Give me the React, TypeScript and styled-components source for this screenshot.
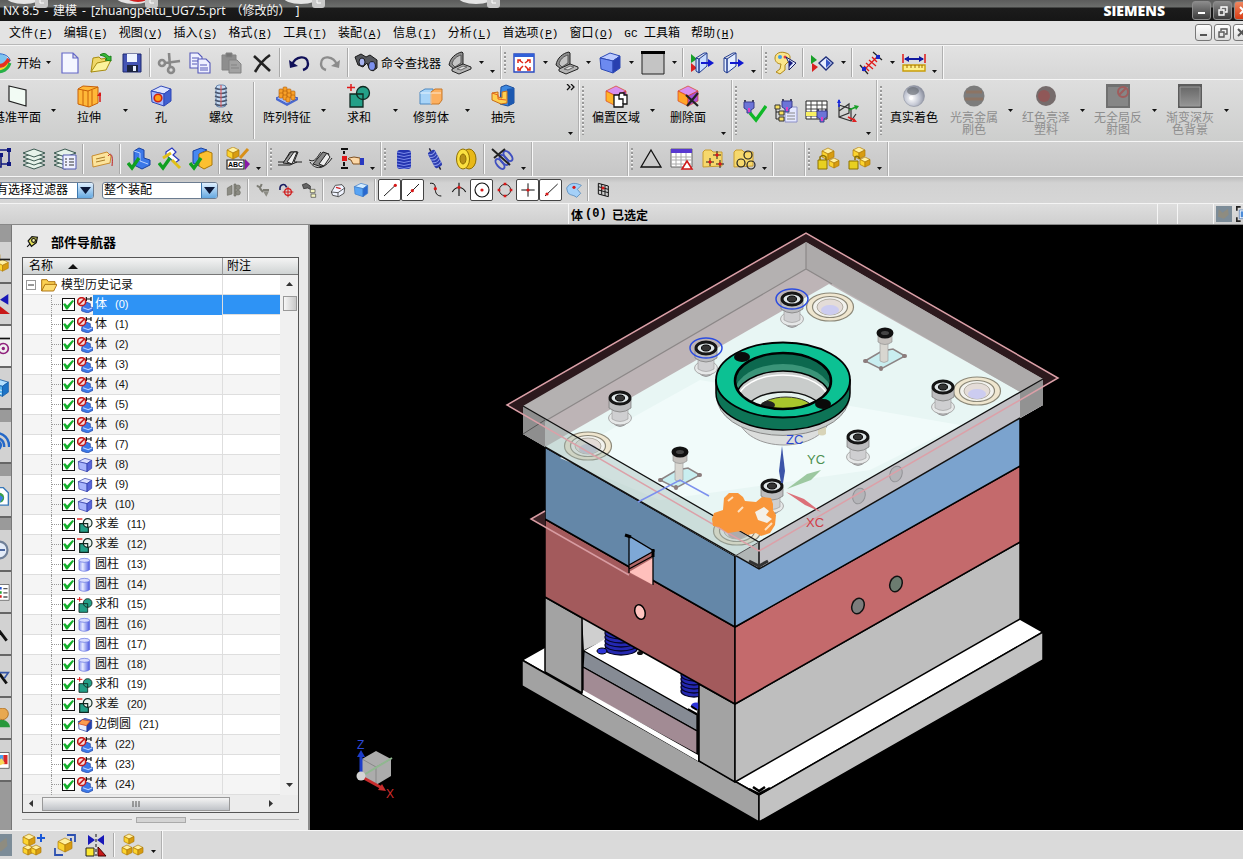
import React from 'react';
import styled, { createGlobalStyle, css } from 'styled-components';

const Global = createGlobalStyle`
  * { box-sizing: border-box; }
  html, body { margin: 0; padding: 0; }
  body {
    overflow: hidden;
    background: #000;
    color: #000;
    font-family: "Liberation Sans", "Noto Sans CJK SC", sans-serif;
    font-size: 12px;
  }
  button, select, input { font: inherit; color: inherit; margin: 0; padding: 0; }
`;

/* ---------- icons ---------- */

const cube = (x: number, y: number, s: number, l: string, t: string, r: string, st = 'none') => (
  <g stroke={st} strokeWidth=".7" strokeLinejoin="round">
    <polygon fill={t} points={`${x},${y - s} ${x + s},${y - s / 2} ${x},${y} ${x - s},${y - s / 2}`} />
    <polygon fill={l} points={`${x - s},${y - s / 2} ${x},${y} ${x},${y + s} ${x - s},${y + s / 2}`} />
    <polygon fill={r} points={`${x + s},${y - s / 2} ${x},${y} ${x},${y + s} ${x + s},${y + s / 2}`} />
  </g>
);
const block = (l: string, t: string, r: string, st: string) => (
  <g stroke={st} strokeWidth="1" strokeLinejoin="round">
    <polygon fill={t} points="2,7 12,2 22,5 15,10" />
    <polygon fill={l} points="2,7 15,10 15,22 3,18" />
    <polygon fill={r} points="15,10 22,5 22,17 15,22" />
  </g>
);
const gold = (x: number, y: number, s = 6) => cube(x, y, s, '#fcd430', '#fff0a0', '#d89c10', '#b07c08');
const tick = <path d="M1 16l4 5L12 11" fill="none" stroke="#10a020" strokeWidth="3.4" />;
const laptop = (
  <g stroke="#222" strokeWidth="1" strokeLinejoin="round">
    <path d="M1 14C2 7 8 2 14 1l1 1v11l-9 5z" fill="#8e8e8e" />
    <path d="M4 13C5 8 9 5 13 4v8l-6 4z" fill="#c4c4c4" stroke="#555" />
    <path d="M4 18l11-5 8 3v2l-12 5-7-3z" fill="#b4b4b4" />
    <path d="M9 18l6-3 4 1-6 3z" fill="#ddd" stroke="#666" />
  </g>
);
const plug = (x: number, y: number) => (
  <g transform={`translate(${x} ${y})`}>
    <path d="M1 0v3M9 0v3" stroke="#445" strokeWidth="2" />
    <path d="M0 2h10v6l-3 2v3H3v-3L0 8z" fill="#6c74d8" stroke="#3a3c8c" />
    <path d="M4 8h2v4H4z" fill="#e040c0" />
  </g>
);
const layers = (
  <g fill="#e6f2ea" stroke="#3c5a52" strokeWidth="1">
    {[18, 14, 10, 6].map((y) => (
      <path key={y} d={`M1 ${y}L12 ${y - 4}L23 ${y}L12 ${y + 4}z`} />
    ))}
  </g>
);
const folder = <path d="M2 5l2-2h6l2 2h9v14l-19 1z" fill="#f6d86c" stroke="#c89c30" />;

const ICONS: Record<string, React.ReactNode> = {
  swirl: (
    <g fill="none">
      <circle cx="12" cy="12" r="9" fill="#7cc4f0" />
      <path d="M3 8c6 10 14 8 18 0" stroke="#e83020" strokeWidth="4" />
      <path d="M2 12c4 8 14 9 19 1" stroke="#f8d820" strokeWidth="3" />
      <path d="M4 18c6 5 15 3 18-6" stroke="#28b048" strokeWidth="3" />
      <path d="M1 9c-1-8 20-9 21 1" stroke="#2468d0" strokeWidth="1" />
    </g>
  ),
  newdoc: <path d="M4 2h11l5 5v15H4zM15 2v5h5" fill="#f4f6ff" stroke="#6468c8" strokeWidth="1.2" />,
  open: (
    <g stroke="#a88c10" strokeLinejoin="round">
      <path d="M2 21L4 7l6-1 2 2 8-1v5z" fill="#f0d868" />
      <path d="M2 21l6-9 14-3-5 10z" fill="#fbf29c" />
      <path d="M11 4c4-3 7-1 9 2l2-1v5l-6-1 2-1c-2-3-4-3-7-4z" fill="#38b838" stroke="#188018" />
    </g>
  ),
  save: (
    <g>
      <path d="M3 3h18v18H3z" fill="#4454b4" stroke="#1c2870" />
      <path d="M7 3h10v8H7z" fill="#eef4ff" />
      <path d="M7 14h11v7H7z" fill="#1c2440" />
      <path d="M13 15h3v5h-3z" fill="#e8f0ff" />
    </g>
  ),
  cut: (
    <g fill="none" stroke="#888" strokeWidth="2.6">
      <circle cx="5" cy="12" r="3" />
      <circle cx="14" cy="19" r="3" />
      <path d="M8 12l15-2M13 16L12 2" />
    </g>
  ),
  copy: (
    <g fill="#eef0ff" stroke="#5458b8" strokeWidth="1.1">
      <path d="M2 2h8l4 4v11H2zM4 7h7M4 10h7M4 13h5" />
      <path d="M10 8h8l4 4v10H10zM12 14h7M12 17h8M12 19h8" />
    </g>
  ),
  paste: (
    <g fill="#8e8e8e" stroke="#838383">
      <path d="M3 4h14v15H3z" />
      <path d="M7 2h6v4H7z" fill="#777" />
      <path d="M10 9h8l4 4v9H10zM12 14h6M12 17h8" fill="#a2a2a2" />
    </g>
  ),
  del: <path d="M4 5l16 15M20 4C14 8 9 14 5 21" fill="none" stroke="#222" strokeWidth="2.6" />,
  undo: (
    <g fill="none" stroke="#101058" strokeWidth="2.4">
      <path d="M5 14C8 5 21 3 21 13c0 3-2 5-5 6" />
      <path d="M2 9l1 8 8-2z" fill="#101058" stroke="none" />
    </g>
  ),
  redo: (
    <g fill="none" stroke="#8c8c8c" strokeWidth="2.4">
      <path d="M19 14C16 5 3 3 3 13c0 3 2 5 5 6" />
      <path d="M22 9l-1 8-8-2z" fill="#8c8c8c" stroke="none" />
    </g>
  ),
  find: (
    <g stroke="#1a1a1a" strokeWidth="1">
      <path d="M1 6l6-3 5 3 4-2 7 5v8l-4 3-4-3-2-5-4 4-5-2z" fill="#55575c" />
      <ellipse cx="8" cy="11" rx="3" ry="4" fill="#a8b4f0" />
      <ellipse cx="18" cy="15" rx="3.4" ry="4.4" fill="#7c90ee" />
    </g>
  ),
  laptop,
  fit: (
    <g>
      <path d="M2 3h20v18H2z" fill="#fff" stroke="#2848c0" strokeWidth="1.4" />
      <path d="M2 3h20v3H2z" fill="#3060d8" />
      <path d="M7 9l4 3M17 9l-4 3M7 19l4-4M17 19l-4-4M6 12V9h3M18 12V9h-3M6 16v3h3M18 16v3h-3" fill="none" stroke="#e02818" strokeWidth="1.5" />
    </g>
  ),
  bluecube: block('#6c8af0', '#bccbff', '#2840b0', '#2c48b4'),
  window: (
    <g>
      <path d="M1 1h22v22H1z" fill="#c4c4c4" stroke="#222" />
      <path d="M0 0h24v3H0z" fill="#000" />
    </g>
  ),
  doorin: (
    <g>
      <path d="M1 3l6 5-6 4z" fill="#18a028" />
      <path d="M1 12l6 5-6 4z" fill="#d82020" />
      <path d="M9 8l8-6v13l-8 7zM6 7l3 1v14l-3-2zM6 7l8-5h3" fill="#c8dcff" stroke="#223c90" />
      <path d="M11 12h8" stroke="#1018d0" strokeWidth="2" />
      <path d="M18 8l6 4-6 4z" fill="#1018d0" />
    </g>
  ),
  door: (
    <g>
      <path d="M6 8l9-6v13l-9 7zM3 7l3 1v14l-3-2zM3 7l9-5h3" fill="#e4eeff" stroke="#223c90" />
      <path d="M9 12h9" stroke="#1018d0" strokeWidth="2" />
      <path d="M17 8l6 4-6 4z" fill="#1018d0" />
    </g>
  ),
  palette: (
    <g stroke="#b08818">
      <path d="M2 7C2 2 8 0 13 2c5 1 5 6 2 9l-3 3v5l-5 4-4-2 4-3 1-5c-3 0-6-2-6-6z" fill="#fbe68c" />
      <circle cx="7" cy="6" r="2" fill="#40a0e8" stroke="none" />
      <circle cx="12" cy="6" r="1.5" fill="#e84040" stroke="none" />
      <path d="M13 6l10 6-7 7V12z" fill="#dfe8ff" stroke="#181c60" />
      <path d="M16 9l4 3-4 4z" fill="#181c80" stroke="none" />
    </g>
  ),
  arrowcube: (
    <g>
      <path d="M1 4l6 5-6 4z" fill="#18a028" />
      <path d="M2 12l6 4-6 5z" fill="#d82020" />
      <path d="M9 12l7-6 7 6-7 7z" fill="#e8eeff" stroke="#20307c" strokeWidth="1.4" />
      <path d="M16 8v9l5-5z" fill="#3858c8" />
    </g>
  ),
  align: (
    <g strokeWidth="1.3" stroke="#e01818">
      <path d="M4 20L20 4M7 12l7 6M10 9l7 6M5 15l5 5M13 6l5 5" />
      <path d="M1 14l8 9M14 1l9 8" stroke="#222" />
      <path d="M3 16h4v4H3zM17 4h4v4h-4z" fill="#1828c8" stroke="none" />
    </g>
  ),
  ruler: (
    <g>
      <path d="M1 3v9M23 3v9" stroke="#e01818" strokeWidth="1.5" />
      <path d="M3 8h18" stroke="#1018a0" strokeWidth="2" />
      <path d="M2 8l5-3v6zM22 8l-5-3v6z" fill="#1018a0" />
      <path d="M1 14h22v6H1z" fill="#fdf08c" stroke="#c89c08" strokeWidth="1.4" />
      <path d="M5 14v3M9 14v3M13 14v3M17 14v3M20 14v3" stroke="#a06c00" />
    </g>
  ),
  plane: <path d="M4 2l17 4v16L4 17z" fill="#f2fbf4" stroke="#222" strokeWidth="1.2" />,
  extrude: (
    <g stroke="#c86008">
      <path d="M1 5l5-3 15 1v16l-9 4-11-3z" fill="#ffb838" />
      <path d="M1 5l10 2 10-4M11 7v16M6 6v15M15 6v15" fill="none" />
      <path d="M23 9v9" stroke="#d81818" strokeWidth="1.5" />
      <path d="M20 12l3-4 3 4z" fill="#d81818" stroke="none" />
    </g>
  ),
  hole: (
    <g>
      {block('#a4b8ff', '#dce4ff', '#4060d0', '#3048b8')}
      <circle cx="9" cy="14" r="3.8" fill="#ff9c18" stroke="#d02010" strokeWidth="1.6" />
    </g>
  ),
  thread: (
    <g>
      <rect x="7" y="1" width="10" height="22" rx="3" fill="#c8dcf4" stroke="#6888b0" />
      {[4, 8, 12, 16, 20].map((y) => (
        <path key={y} d={`M6 ${y}q6 3 12 0`} fill="none" stroke="#4c5870" strokeWidth="1.4" />
      ))}
      <path d="M12 1v22" stroke="#e05050" />
    </g>
  ),
  pattern: (
    <g>
      <path d="M1 14l9-4 13 4-11 6z" fill="#a8c0ff" stroke="#3858c0" />
      <path d="M1 14v2l11 6 11-6v-2l-11 6z" fill="#4868d0" />
      {[[9, 7], [5, 9], [13, 9], [9, 11], [17, 11], [5, 13], [13, 13], [9, 15], [17, 15], [12, 17]].map(([x, y]) => (
        <rect key={`${x}-${y}`} x={x - 1} y={y - 4} width="4" height="5" rx="1" fill="#f8a028" stroke="#b05c08" strokeWidth=".6" />
      ))}
    </g>
  ),
  unite: (
    <g stroke="#102820" strokeWidth="1.3">
      <path d="M3 10h13v13H3z" fill="#24a088" />
      <circle cx="16" cy="9" r="6.5" fill="#24a088" />
      <path d="M9.500 10H16v5.500" fill="none" />
      <path d="M4 0v7M0 3.500h8" stroke="#e01818" strokeWidth="1.5" />
    </g>
  ),
  trim: (
    <g>
      <path d="M1 8l5-3h8v14l-2 1H1z" fill="#a8d4f8" stroke="#4c88c0" />
      <path d="M12 8l4-3h7v11l-3 4h-8z" fill="#fcb060" stroke="#c87828" />
      <path d="M1 9h21M12 9v11" stroke="#fff" opacity=".7" />
    </g>
  ),
  shell: (
    <g>
      <path d="M10 3l5-2 8 3v15l-6 3-8-2z" fill="#3c88e0" stroke="#1c4c98" />
      <path d="M16 5l7-1v15l-6 3z" fill="#1c58b0" />
      <path d="M1 9l6-1v5l4 1V8l5-1v12l-6 1-9-4z" fill="#ffd050" stroke="#c86c18" />
      <path d="M1 9l6 2v4l8 1" fill="none" stroke="#e86020" />
    </g>
  ),
  offset: (
    <g>
      {cube(12, 12, 10, '#ffb428', '#d890f0', '#8c40c8', '#d84020')}
      <path d="M10 11h5l1-2h4v2h3v9h-4v3h-9z" fill="#fff" stroke="#111" strokeWidth="1.3" />
      <path d="M15 11v4h4v5" fill="none" stroke="#111" strokeWidth="1.3" />
    </g>
  ),
  delface: (
    <g>
      {cube(12, 12, 10, '#ffa428', '#d890f0', '#a850d8', '#d84020')}
      <path d="M10 11l12 11M22 9L11 22" stroke="#222" strokeWidth="2.2" />
    </g>
  ),
  plugcheck: (
    <g>
      {plug(1, 1)}
      <path d="M7 14l6 7L23 7" fill="none" stroke="#10b828" strokeWidth="3.4" />
    </g>
  ),
  plugtree: (
    <g>
      <path d="M11 8h12v15H11z" fill="#e4e8ff" stroke="#8c90c8" />
      <path d="M13 14h8M13 17h8M13 20h8" stroke="#888" />
      {plug(8, 0)}
      <path d="M2 8v12h5M2 13h5" fill="none" stroke="#222" />
      <path d="M1 6h5v4H1zM5 12h5v4H5zM5 18h5v4H5z" fill="#f8e060" stroke="#333" />
    </g>
  ),
  plugtable: (
    <g>
      <path d="M1 2h21v18H1z" fill="#fff" stroke="#222" />
      <path d="M1 6h21M1 10h21M1 13h21M1 17h21M6 2v18M12 2v18M17 2v18" stroke="#444" />
      <path d="M1 13h11v4H1z" fill="#f8f060" />
      {plug(12, 10)}
    </g>
  ),
  csys: (
    <g fill="none">
      <path d="M3 6v12l12 4V10zM3 12l10-7v9L3 18M15 22l5-7" stroke="#333" strokeWidth="1.2" />
      <path d="M3 1v7" stroke="#1828e0" strokeWidth="1.6" />
      <path d="M1 4l2-4 2 4z" fill="#1828e0" />
      <path d="M13 11l7-3" stroke="#18a028" strokeWidth="1.6" />
      <path d="M18 6l5 1-3 4z" fill="#18a028" />
      <path d="M12 18l6 3" stroke="#e02020" strokeWidth="1.8" />
      <path d="M16 23l5 0-3-4z" fill="#e02020" />
    </g>
  ),
  chrome: (
    <g>
      <circle cx="12" cy="12" r="10.500" fill="url(#gChrome)" stroke="#8c90a0" strokeWidth=".6" />
      <ellipse cx="11" cy="7" rx="6" ry="4" fill="#5c6068" opacity=".6" />
      <circle cx="9" cy="14" r="2" fill="#fff" />
    </g>
  ),
  ballA: (
    <g>
      <circle cx="12" cy="12" r="10.500" fill="#7c7c7c" />
      <path d="M4 8h16M3 15h18" stroke="#8c7464" strokeWidth="3" />
    </g>
  ),
  ballB: (
    <g>
      <circle cx="12" cy="12" r="10" fill="#766c6c" />
      <circle cx="10" cy="12" r="6" fill="#905858" />
    </g>
  ),
  panelA: (
    <g>
      <path d="M0 0h24v24H0z" fill="#707070" />
      <path d="M2 3h20v19H2z" fill="#868686" />
      <circle cx="17" cy="8" r="5" fill="none" stroke="#a05c5c" strokeWidth="2" />
      <path d="M13 11l7-7" stroke="#a05c5c" strokeWidth="2" />
    </g>
  ),
  panelB: (
    <g>
      <path d="M0 0h24v24H0z" fill="#5c5c5c" />
      <path d="M2 3h20v19H2z" fill="url(#gPanel)" stroke="#999" />
    </g>
  ),
  nest: (
    <g fill="none" stroke="#101880" strokeWidth="1.6">
      <path d="M5 3h16v14H5z" />
      <path d="M1 8h12v12H1z" fill="#f8f060" />
      <path d="M19 1h4v4h-4zM11 6h4v4h-4zM19 15h4v4h-4z" fill="#101880" stroke="none" />
    </g>
  ),
  layers,
  layerlist: (
    <g>
      {layers}
      <path d="M10 8h13v14H10z" fill="#eef0ff" stroke="#5058b0" />
      <path d="M12 12h2M12 15h2M12 18h2M16 12h5M16 15h5M16 18h5" stroke="#333" />
    </g>
  ),
  tag: (
    <g>
      <path d="M2 9l15-4 4 4-1 7-17 4z" fill="#fce49c" stroke="#c88c30" />
      <path d="M6 12l9-2M6 15l9-2" stroke="#a87c28" />
      <path d="M18 9c4-5 5 2 4 10" fill="none" stroke="#c02020" />
    </g>
  ),
  asm1: (
    <g>
      <path d="M7 4l5-3 5 2v8l6 2v5l-8 4-8-4z" fill="#3c78e8" stroke="#1840a0" />
      <path d="M7 4l6 2v8l8 3" fill="none" stroke="#b8d0ff" />
      {tick}
    </g>
  ),
  asm2: (
    <g>
      <path d="M8 5l6-4 4 4-3 3 6 5-4 3-9-8z" fill="#fff" stroke="#2838c0" strokeWidth="1.2" />
      <path d="M5 11l8-5M14 13l8 8" stroke="#e0c018" strokeWidth="3" />
      {tick}
    </g>
  ),
  asm3: (
    <g>
      <path d="M4 4l8-3 6 2-8 4v12l-6-3z" fill="#4888f0" stroke="#1840a0" />
      <path d="M10 7l8-3 5 2v12l-8 4-5-3z" fill="#fcc030" stroke="#a87808" />
      {tick}
    </g>
  ),
  abc: (
    <g>
      {gold(7, 6)}
      <path d="M22 2l-8 9" stroke="#d89018" strokeWidth="3" />
      <path d="M1 13h17v9H1z" fill="#fff" stroke="#222" strokeWidth="1.2" />
      <text x="2" y="20" fontFamily="Liberation Sans" fontWeight="700" fontSize="7">ABC</text>
      <path d="M19 12l5 5-5 6z" fill="#8818a8" />
    </g>
  ),
  surf1: (
    <g stroke="#222">
      <path d="M0 15h6l6-10h8l-4 10h8M0 18h12l7-3" fill="none" />
      <path d="M5 16l8-11h6l-6 12z" fill="#999" />
      <path d="M9 15l7-10h3l-5 12z" fill="#eee" />
    </g>
  ),
  surf2: (
    <g stroke="#222">
      <path d="M1 15c5 8 14 8 22-4M0 13c6 3 8-3 12-8" fill="none" />
      <path d="M4 17l10-12 6 2-7 13z" fill="#888" />
      <path d="M10 17l8-11 3 4-6 9z" fill="#eee" />
    </g>
  ),
  hand: (
    <g>
      <path d="M1 2h7M1 21h7M4 4v3M4 15v4" stroke="#111" strokeWidth="2" />
      <path d="M2 9h5v5H2z" fill="#e01818" />
      <path d="M9 11l5-1 6 1v6h-7l-2-4-3-1z" fill="#fcd8a8" stroke="#805020" />
      <path d="M20 11h4v7h-4z" fill="#2838c0" />
    </g>
  ),
  spring: (
    <g>
      <rect x="5" y="3" width="14" height="19" rx="3" fill="#2434b0" />
      {[5, 8, 11, 14, 17, 20].map((y) => (
        <path key={y} d={`M5 ${y}q7 3 14 0`} fill="none" stroke="#7c8ce8" strokeWidth="1" />
      ))}
    </g>
  ),
  spring2: (
    <g transform="rotate(-28 12 12)">
      <rect x="8" y="3" width="8" height="18" rx="2" fill="#2c3cb0" />
      {[5, 8, 11, 14, 17].map((y) => (
        <path key={y} d={`M8 ${y}q4 3 8 0`} fill="none" stroke="#8c9ce8" />
      ))}
      <path d="M12 3V0M12 21v3" stroke="#223" strokeWidth="1.4" />
    </g>
  ),
  washer: (
    <g stroke="#907000">
      <ellipse cx="15" cy="12" rx="7" ry="10" fill="#e8b818" />
      <ellipse cx="9" cy="12" rx="6.500" ry="10" fill="#fbe040" />
      <ellipse cx="9" cy="12" rx="3" ry="5" fill="#b89018" />
    </g>
  ),
  cutspring: (
    <g>
      {[0, 4, 8].map((d) => (
        <ellipse key={d} cx={9 + d} cy={17 - d} rx="3" ry="6" transform={`rotate(-40 ${9 + d} ${17 - d})`} fill="none" stroke="#4050c0" strokeWidth="2" />
      ))}
      <path d="M1 2l18 16M14 2L3 11" stroke="#222" strokeWidth="2" />
    </g>
  ),
  triangle: <path d="M12 3L22 20H2z" fill="none" stroke="#111" strokeWidth="1.3" />,
  sheet: (
    <g>
      <path d="M1 2h21v18H1z" fill="#fff" stroke="#666" />
      <path d="M1 2h21v4H1z" fill="#5838d0" />
      <path d="M1 10h21M1 13h21M1 17h21M6 6v14M11 6v14M16 6v14" stroke="#aaa" />
      <path d="M17 14l5 8H12z" fill="#fff" stroke="#d01818" strokeWidth="1.5" />
    </g>
  ),
  foldplus: (
    <g>
      {folder}
      <path d="M16 4v8M12 8h8M9 11v8M5 15h8M19 13v8M15 17h8" stroke="#222" />
      <path d="M15 7h2v2h-2zM8 14h2v2H8zM18 16h2v2h-2z" fill="#e01818" stroke="#e01818" />
    </g>
  ),
  foldcirc: (
    <g>
      {folder}
      <g fill="none" stroke="#222" strokeWidth="1.2">
        <circle cx="16" cy="8" r="4" />
        <circle cx="9" cy="16" r="4" />
        <circle cx="19" cy="18" r="4" />
      </g>
    </g>
  ),
  lock1: (
    <g>
      {gold(12, 7)}
      {gold(18, 16, 5)}
      <path d="M4 13v-3q3-3 6 0v3" fill="none" stroke="#8c7000" strokeWidth="1.5" />
      <path d="M2 13h9v9H2z" fill="#e8d020" stroke="#8c7000" />
    </g>
  ),
  lock2: (
    <g>
      {gold(12, 6)}
      {gold(18, 15, 5)}
      <path d="M8 13v-3q3-2 5 2" fill="none" stroke="#8c7000" strokeWidth="1.5" />
      <path d="M2 14h9v8H2z" fill="#e8d020" stroke="#8c7000" />
    </g>
  ),
  graygear: (
    <g fill="#8c8c84" stroke="#6c6c64">
      <path d="M2 9l7-4v13l-7 2zM12 3h3v18h-3z" />
      <circle cx="18" cy="8" r="3.500" />
      <circle cx="18" cy="16" r="3.500" />
    </g>
  ),
  graytool: (
    <g fill="none" stroke="#7c7c74" strokeWidth="3">
      <path d="M3 5c4 5 6 2 7-2M7 9l5 6M12 12h9" />
      <path d="M12 14l9 0-4 8z" fill="#8c8c84" stroke="none" />
    </g>
  ),
  rotcross: (
    <g fill="none">
      <path d="M3 12C2 3 10 1 13 8" stroke="#181c60" strokeWidth="2.4" />
      <circle cx="15" cy="15" r="5" stroke="#d01818" strokeWidth="1.8" />
      <path d="M15 7v16M7 15h16" stroke="#d01818" strokeWidth="1.5" />
    </g>
  ),
  cubefind: (
    <g>
      <path d="M2 4l6-2 6 4v5l-4-2-6 1z" fill="#666" stroke="#222" />
      <path d="M14 11h7v5h-7zM15 18h7v5h-7z" fill="#f4f4c0" stroke="#444" />
    </g>
  ),
  whitebox: (
    <g stroke="#222" strokeWidth="1.1" fill="#f0f4ff">
      <path d="M2 15l6-10 10-1 4 5-1 8-8 5-9-2z" />
      <path d="M2 15l10 1 10-7M12 16v6" fill="none" />
      <path d="M9 8l7 2" stroke="#d02020" strokeWidth="2" />
    </g>
  ),
  glasscube: block('#58a4f4', '#d4ecff', '#2868d0', '#3878c8'),
  end: (
    <g>
      <path d="M3 21L20 5" stroke="#111" strokeWidth="1.4" />
      <circle cx="20" cy="5" r="2.400" fill="#d81818" />
    </g>
  ),
  mid: (
    <g>
      <path d="M3 21L21 3" stroke="#111" strokeWidth="1.4" />
      <circle cx="11" cy="13" r="2.400" fill="#d81818" />
    </g>
  ),
  curve: (
    <g>
      <path d="M3 2c8-1 8 4 8 9s2 10 9 10" fill="none" stroke="#111" strokeWidth="1.500" />
      <circle cx="11" cy="10" r="2.400" fill="#d81818" />
    </g>
  ),
  inter: (
    <g>
      <path d="M2 15c5-9 15-9 20 0M12 1v20" fill="none" stroke="#111" strokeWidth="1.700" />
      <circle cx="12" cy="8" r="2.400" fill="#d81818" />
    </g>
  ),
  center: (
    <g>
      <circle cx="12" cy="12" r="10.500" fill="none" stroke="#111" strokeWidth="1.700" />
      <circle cx="12" cy="12" r="2.400" fill="#d81818" />
    </g>
  ),
  quad: (
    <g>
      <circle cx="12" cy="12" r="8.500" fill="none" stroke="#111" strokeWidth="1.300" />
      <path d="M10 1h4v4h-4zM10 19h4v4h-4zM1 10h4v4H1zM19 10h4v4h-4z" fill="#d81818" />
    </g>
  ),
  exist: (
    <g>
      <path d="M2 12h20M12 2v20" stroke="#111" strokeWidth="1.500" />
      <circle cx="12" cy="12" r="2.400" fill="#d81818" />
    </g>
  ),
  oncurve: (
    <g>
      <path d="M3 21L22 3" stroke="#111" strokeWidth="1.400" />
      <circle cx="6" cy="18" r="2.400" fill="#d81818" />
    </g>
  ),
  onface: (
    <g>
      <path d="M1 9C6 0 15 1 23 5l-6 6 5 6-6 6C9 17 3 23 1 9z" fill="#a4d0f8" stroke="#4078b0" />
      <circle cx="12" cy="8" r="2.400" fill="#d81818" />
    </g>
  ),
  grid: (
    <g>
      <path d="M5 2l15 4v16L5 18z" fill="#ccc" stroke="#111" strokeWidth="1.500" />
      <path d="M5 7l15 4M5 12l15 4M10 3v16M15 5v16" stroke="#111" strokeWidth="1.400" />
      <circle cx="12" cy="9" r="2.400" fill="#d81818" />
    </g>
  ),
  noise: (
    <g>
      <path d="M0 0h24v24H0z" fill="#7c8c98" />
      <path d="M4 5l6 5 8-6 1 9-7 6-9-3z" fill="#8e8c80" />
    </g>
  ),
  fullscreen: (
    <g>
      <path d="M1 7V1h6" fill="none" stroke="#222" strokeWidth="3" />
      <path d="M1 17v6h6" fill="none" stroke="#222" strokeWidth="3" />
      <path d="M5 6h18v13H5z" fill="#fff" stroke="#3c6cb0" />
      <path d="M7 8h16v9H7z" fill="#4c8cd8" />
    </g>
  ),
  addcomp: (
    <g>
      {gold(7, 7)}
      {gold(6, 17, 5)}
      {gold(14, 17, 5)}
      <path d="M19 1v8M15 5h8" stroke="#1858d8" strokeWidth="2" />
    </g>
  ),
  movecomp: (
    <g>
      {gold(12, 12, 7)}
      <path d="M14 2h8v7M17 6h1v2M10 22H2v-7" fill="none" stroke="#2c50b0" strokeWidth="1.800" />
    </g>
  ),
  mirror: (
    <g>
      <path d="M4 2l7 5-7 5zM20 2l-7 5 7 5z" fill="#1818b8" />
      <path d="M12 1v22" stroke="#111" strokeDasharray="3 2" />
      <path d="M2 15h8v8H2z" fill="#fce830" stroke="#222" />
      <path d="M14 14l8 9h-8z" fill="#c81818" stroke="#400" />
    </g>
  ),
  comps: (
    <g>
      {gold(8, 6, 5)}
      {gold(6, 17, 5)}
      {gold(17, 17, 5)}
    </g>
  ),
  body: (
    <g>
      <path d="M10 11l5-3 5 2v5l4 1v4l-8 4-9-3v-5z" fill="#3c78e8" stroke="#1840a0" />
      <path d="M9 16l8 3 6-3" fill="none" stroke="#c0d4ff" strokeWidth="1.600" />
      <path d="M14 0v6M14 3h7M21 0v6" stroke="#111" strokeWidth="1.800" />
      <circle cx="7" cy="7" r="6" fill="#f4dcdc" stroke="#c81818" strokeWidth="2.400" />
      <path d="M3 11l8-8" stroke="#c81818" strokeWidth="2.400" />
    </g>
  ),
  block: block('#a8b4fc', '#dce0ff', '#5864d8', '#2c38a8'),
  cylinder: (
    <g stroke="#5c6ce0">
      <path d="M3 5v14q8 5 16 0V5z" fill="url(#gCyl)" />
      <ellipse cx="11" cy="5" rx="8" ry="3" fill="#d8dcff" />
    </g>
  ),
  subtract: (
    <g stroke="#102820" strokeWidth="1.800">
      <path d="M4 10h13v13H4z" fill="#24a088" />
      <circle cx="16" cy="9" r="6.500" fill="#eef4f0" />
      <path d="M9.500 10H16v5.500" fill="none" />
      <path d="M0 3h8" stroke="#e01818" strokeWidth="2" />
    </g>
  ),
  blend: (
    <g>
      {block('#e8ecff', '#5c80e8', '#2440b0', '#1c3898')}
      <path d="M2 10l6-6 12 2-6 7z" fill="#fc9c50" stroke="#c83818" />
    </g>
  ),
  folder: (
    <g stroke="#a86c08" strokeWidth="1.400" strokeLinejoin="round">
      <path d="M1 21V4h8l2 3h10v5" fill="#fbd050" />
      <path d="M1 21l5-10h18l-5 10z" fill="#fddc70" />
    </g>
  ),
  pin: (
    <g stroke="#111" strokeWidth="2.200">
      <path d="M2 22l6-6" />
      <path d="M4 11L11 3l10 1-2 10-9 7z" fill="#e4e058" />
      <circle cx="14" cy="10" r="3.500" fill="#fbf8b0" />
    </g>
  ),
  tabAsm: <g>{gold(6, 6)}{gold(15, 16, 7)}<path d="M8 9h16" stroke="#222" strokeWidth="2" /></g>,
  tabCons: (
    <g>
      <path d="M22 0v13L12 7z" fill="#1818b8" />
      <path d="M10 13l14 11H10z" fill="#c81818" />
    </g>
  ),
  tabPart: (
    <g>
      <path d="M8 3h16" stroke="#111" strokeWidth="2" />
      <circle cx="16" cy="15" r="6" fill="none" stroke="#90207c" strokeWidth="2" />
      <circle cx="16" cy="15" r="2" fill="#90207c" />
    </g>
  ),
  tabLib: <g>{block('#58b4f0', '#b4e0ff', '#1c74c8', '#1860a8')}<path d="M4 12l10 3M4 16l10 3" stroke="#fff" /></g>,
  tabWeb: (
    <g fill="none" stroke="#2468c8" strokeWidth="3">
      <circle cx="8" cy="16" r="5" fill="#3c90e8" />
      <path d="M6 7c8 0 11 4 11 11M6 1c11 0 17 7 17 17" />
    </g>
  ),
  tabDoc: (
    <g>
      <path d="M2 2h14l6 6v15H2z" fill="#fff" stroke="#3878b8" strokeWidth="1.600" />
      <circle cx="11" cy="14" r="6" fill="#38a048" />
      <path d="M6 13q5-5 10 1l-4 6z" fill="#3c80e0" />
    </g>
  ),
  tabClock: (
    <g>
      <circle cx="11" cy="12" r="10" fill="#e4ecf8" stroke="#708098" strokeWidth="2.600" />
      <path d="M11 5v7h7" fill="none" stroke="#1c3c80" strokeWidth="2" />
    </g>
  ),
  tabList: (
    <g>
      <path d="M0 3h23v19H0z" fill="#fff" stroke="#666" />
      <path d="M11 6h3v3h-3z" fill="#2858d0" />
      <path d="M11 11h3v3h-3z" fill="#20a030" />
      <path d="M11 16h3v3h-3z" fill="#d02020" />
      <path d="M16 8h5M16 13h5M16 18h5" stroke="#555" strokeWidth="1.600" />
    </g>
  ),
  tabLine: <path d="M8 4l12 16" stroke="#111" strokeWidth="3.400" />,
  tabPen: <g><path d="M6 2l14 19" stroke="#111" strokeWidth="3.400" /><path d="M6 8h16l-5 7" fill="none" stroke="#3858a8" strokeWidth="2" /></g>,
  tabUser: (
    <g>
      <path d="M4 23c0-12 19-12 20 0z" fill="#28983c" />
      <circle cx="15" cy="7" r="7" fill="#e8a850" stroke="#a86818" />
    </g>
  ),
  tabPic: (
    <g>
      <path d="M0 3h23v19H0z" fill="#fff" stroke="#555" />
      <path d="M10 6h6v8h-6z" fill="#48a0f0" />
      <path d="M16 6h5v11h-5z" fill="#d82828" />
      <path d="M8 14l6-4 4 6-8 3z" fill="#f8d858" />
    </g>
  ),
};

const Svg = styled.svg`
  display: block;
  flex: none;
`;
const Icon = ({ name, size = 24 }: { name: string; size?: number }) => (
  <Svg width={size} height={size} viewBox="0 0 24 24" aria-hidden="true">
    {ICONS[name]}
  </Svg>
);
const HiddenSvg = styled.svg`
  position: absolute;
`;
const Defs = () => (
  <HiddenSvg width="0" height="0" aria-hidden="true">
    <defs>
      <radialGradient id="gChrome" cx=".4" cy=".6" r=".7">
        <stop offset="0" stopColor="#fff" />
        <stop offset=".5" stopColor="#c4c8d4" />
        <stop offset="1" stopColor="#787c8c" />
      </radialGradient>
      <linearGradient id="gPanel" x2="0" y2="1">
        <stop offset="0" stopColor="#686868" />
        <stop offset="1" stopColor="#959595" />
      </linearGradient>
      <linearGradient id="gCyl">
        <stop offset="0" stopColor="#8c98f4" />
        <stop offset=".35" stopColor="#e8ecff" />
        <stop offset="1" stopColor="#4854e0" />
      </linearGradient>
    </defs>
  </HiddenSvg>
);

/* ---------- frame ---------- */

const Page = styled.div`
  display: flex;
  flex-direction: column;
  height: 100vh;
  overflow: hidden;
`;
const TitleBar = styled.header`
  position: relative;
  display: flex;
  align-items: center;
  flex: none;
  height: 21px;
  padding-left: 3px;
  overflow: hidden;
  color: #f4f4f4;
  background: linear-gradient(#5c5c5c 0, #6c6e6c 7px, #1c1c1c 8px, #161616 100%);
`;
const TitleText = styled.h1`
  display: flex;
  gap: 5px;
  margin: 0;
  font: 400 12px/20px "Noto Sans", "Noto Sans CJK SC", sans-serif;
  white-space: nowrap;
`;
const Bubbles = styled.svg`
  position: absolute;
  left: 0;
  top: 0;
`;
const Brand = styled.span`
  margin-left: auto;
  margin-right: 27px;
  font: 800 14px/20px "Open Sans", sans-serif;
  color: #fff;
`;
const WindowButtons = styled.div<{ $shift: number }>`
  display: flex;
  gap: 2px;
  flex: none;
  margin-right: ${(p) => -p.$shift}px;
`;
const CaptionButton = styled.button<{ $tone: 'dark' | 'red' | 'light' }>`
  display: grid;
  place-items: center;
  width: ${(p) => (p.$tone === 'light' ? 17 : 19)}px;
  height: ${(p) => (p.$tone === 'light' ? 17 : 19)}px;
  border-radius: 3px;
  border: 1px solid #8c8c8c;
  color: #fff;
  background: linear-gradient(#8a8a8a, #3c3c3c);
  ${(p) => p.$tone === 'red' && css`background: linear-gradient(#f08860, #d83c14);`}
  ${(p) => p.$tone === 'light' && css`
    color: #555;
    border-color: #777;
    background: linear-gradient(#fff, #dcdcdc);
  `}
`;
const MenuBar = styled.nav`
  display: flex;
  align-items: center;
  flex: none;
  height: 24px;
  padding-left: 3px;
  overflow: hidden;
  background: #e3e3e3;
  border-bottom: 1px solid #b8b8b8;
`;
const MenuItem = styled.button`
  flex: none;
  height: 22px;
  padding: 0 5px 0 6px;
  border: 0;
  background: none;
  font-size: 12px;
  line-height: 22px;
  white-space: nowrap;
`;
const Mono = styled.span`
  font-family: "Liberation Mono", monospace;
  font-size: 11px;
`;
const MenuSpace = styled.span`
  flex: 1;
`;

const Bar = styled.div<{ $h: number; $bg: string }>`
  display: flex;
  align-items: stretch;
  flex: none;
  height: ${(p) => p.$h}px;
  overflow: hidden;
  background: ${(p) => p.$bg};
  border-top: 1px solid #f6f6f6;
`;
const ToolButton = styled.button<{ $w?: number }>`
  display: flex;
  align-items: center;
  justify-content: center;
  flex: none;
  width: ${(p) => p.$w ?? 31}px;
  border: 0;
  background: none;
`;
const TextButton = styled(ToolButton)`
  width: auto;
  gap: 3px;
  padding: 0 3px;
  white-space: nowrap;
`;
const ClippedButton = styled(ToolButton)`
  width: 18px;
  justify-content: flex-end;
  padding-right: 6px;
`;
const StartButton = styled(TextButton)`
  gap: 5px;
  margin-left: -12px;
  padding: 0 1px 0 0;
`;
const BigButton = styled.button`
  display: flex;
  flex-direction: column;
  align-items: center;
  flex: none;
  width: 60px;
  padding-top: 4px;
  gap: 4px;
  border: 0;
  background: none;
  line-height: 12px;
  &:disabled { color: #8e8e8e; }
`;
const BigLabel = styled.span`
  width: 52px;
  text-align: center;
`;
const Lead = styled.div`
  display: flex;
  flex: none;
  margin-left: -13px;
`;
const DropButton = styled.button<{ $low?: boolean }>`
  display: flex;
  flex-direction: column;
  align-items: center;
  justify-content: ${(p) => (p.$low ? 'flex-end' : 'center')};
  flex: none;
  width: ${(p) => (p.$low ? 11 : 12)}px;
  padding-bottom: ${(p) => (p.$low ? 6 : 0)}px;
  border: 0;
  background: none;
`;
const MoreColumn = styled(DropButton)`
  justify-content: space-between;
  padding-top: 4px;
`;
const Separator = styled.span`
  flex: none;
  width: 6px;
  margin: 2px 0;
  border-left: 2px solid transparent;
  background: linear-gradient(90deg, #aaa 1px, #fafafa 1px, #fafafa 2px, transparent 2px);
  background-origin: padding-box;
  background-clip: padding-box;
`;
const GroupEnd = styled.span`
  flex: none;
  width: 4px;
  border-left: 2px solid transparent;
  background: linear-gradient(90deg, #b0b0b0 1px, #f8f8f8 1px, #f8f8f8 2px);
  background-clip: padding-box;
`;
const Grip = styled.span`
  flex: none;
  width: 6px;
  margin: 6px 0;
  border-left: 2px solid transparent;
  border-right: 2px solid transparent;
  background: repeating-linear-gradient(#999 0 2px, #f4f4f4 2px 3px, transparent 3px 4px);
  background-clip: padding-box;
`;
const Gap = styled.span<{ $w: number }>`
  flex: none;
  width: ${(p) => p.$w}px;
`;

const Triangle = () => (
  <Svg width="5" height="3" viewBox="0 0 5 3" aria-hidden="true">
    <path d="M0 0h5L2.500 3z" fill="#111" />
  </Svg>
);

const Tool = ({ name, label, w, size = 24 }: { name: string; label: string; w?: number; size?: number }) => (
  <ToolButton $w={w} aria-label={label}>
    <Icon name={name} size={size} />
  </ToolButton>
);
const Drop = () => <DropButton aria-label="展开"><Triangle /></DropButton>;
const More = () => <DropButton $low aria-label="工具条选项"><Triangle /></DropButton>;
const Big = ({ name, label, off }: { name: string; label: string; off?: boolean }) => (
  <BigButton disabled={off}>
    <Icon name={name} />
    <BigLabel>{label}</BigLabel>
  </BigButton>
);

/* ---------- selection bar ---------- */

const SelectBox = styled.label<{ $w: number; $left: number }>`
  position: relative;
  flex: none;
  align-self: center;
  width: ${(p) => p.$w}px;
  height: 17px;
  margin-left: ${(p) => p.$left}px;
  border: 1px solid #6c7c90;
  border-radius: 3px;
  overflow: hidden;
  background: #fff;
`;
const Select = styled.select`
  display: block;
  appearance: none;
  width: 100%;
  height: 15px;
  padding-left: 1px;
  border: 0;
  background: none;
  line-height: 15px;
`;
const SelectArrow = styled.span`
  position: absolute;
  right: 0;
  top: 0;
  display: grid;
  place-items: center;
  width: 16px;
  height: 15px;
  pointer-events: none;
  background: linear-gradient(#e0f0ff, #64a8e0);
  border-left: 1px solid #3c78b0;
`;
const SnapButton = styled.button<{ $on?: boolean }>`
  display: grid;
  place-items: center;
  flex: none;
  align-self: center;
  width: 23px;
  height: 22px;
  border: 1px solid ${(p) => (p.$on ? '#444' : 'transparent')};
  border-radius: 2px;
  background: ${(p) => (p.$on ? '#fff' : 'none')};
`;
const Snap = ({ name, on }: { name: string; on?: boolean }) => (
  <SnapButton $on={on} aria-label={name} aria-pressed={!!on}>
    <Icon name={name} size={16} />
  </SnapButton>
);
const Filter = ({ w, left, text, label }: { w: number; left: number; text: string; label: string }) => (
  <SelectBox $w={w} $left={left}>
    <Select aria-label={label}>
      <option>{text}</option>
    </Select>
    <SelectArrow>
      <Svg width="11" height="7" viewBox="0 0 11 7"><path d="M0 0h11L5.500 7z" fill="#0c1838" /></Svg>
    </SelectArrow>
  </SelectBox>
);

const StatusBar = styled.div`
  display: grid;
  grid-template-columns: 568fr 589fr 20fr 36fr 30fr;
  flex: none;
  height: 22px;
  border-top: 1px solid #f4f4f4;
  border-bottom: 1px solid #888;
  background: linear-gradient(#dedede, #cfcfcf);
`;
const StatusCell = styled.div`
  display: flex;
  align-items: center;
  gap: 2px;
  padding-left: 2px;
  overflow: hidden;
  white-space: pre;
  font-weight: 700;
  & + & { border-left: 1px solid #f6f6f6; }
`;
const StatusIcons = styled(StatusCell)`
  gap: 4px;
`;
const StatusMono = styled(Mono)`
  font-size: 12px;
`;

/* ---------- work area ---------- */

const Work = styled.main`
  display: flex;
  flex: 1;
  min-height: 0;
`;
const TabStrip = styled.div`
  flex: none;
  width: 12px;
  padding-top: 17px;
  overflow: hidden;
  background: #9a9a9a;
  border-right: 1px solid #777;
`;
const Tab = styled.button<{ $on?: boolean; $gap?: boolean }>`
  display: flex;
  align-items: center;
  justify-content: flex-end;
  width: 11px;
  height: 42px;
  padding-right: 1px;
  margin-bottom: ${(p) => (p.$gap ? 12 : 0)}px;
  border: 0;
  border-bottom: 2px solid #666;
  background: ${(p) => (p.$on ? '#efefef' : '#d2d2d2')};
`;
const Panel = styled.section`
  display: flex;
  flex-direction: column;
  flex: none;
  width: 298px;
  padding: 0 9px 0 10px;
  background: #e9e9e9;
  border-right: 2px solid #8c8c8c;
`;
const PanelTitle = styled.h2`
  display: flex;
  align-items: center;
  gap: 12px;
  flex: none;
  height: 32px;
  margin: 0;
  padding-left: 4px;
  font-size: 13px;
  font-weight: 700;
`;
const TreeFrame = styled.div`
  position: relative;
  flex: none;
  border: 1px solid #555;
  background: #fff;
`;
const TreeTable = styled.table`
  width: 100%;
  table-layout: fixed;
  border-collapse: separate;
  border-spacing: 0;
  line-height: 16px;
`;
const NameCol = styled.col`
  width: 199px;
`;
const ScrollCol = styled.col`
  width: 18px;
`;
const Head = styled.th`
  height: 17px;
  padding: 0 6px;
  text-align: left;
  font-weight: 400;
  border-bottom: 1px solid #777;
  background: linear-gradient(#f4f4f4, #cfd3d3);
  & + & { border-left: 1px solid #999; padding-left: 4px; }
`;
const HeadTail = styled(Head)`
  && { border-left: 0; }
`;
const HeadLabel = styled.span`
  display: flex;
  align-items: center;
  gap: 15px;
`;
const Row = styled.tr<{ $alt?: boolean; $sel?: boolean }>`
  color: ${(p) => (p.$sel ? '#fff' : '#111')};
  background: ${(p) => (p.$alt ? '#f5f5f5' : '#fff')};
  --fill: ${(p) => (p.$sel ? '#2e93f5' : 'transparent')};
`;
const Cell = styled.td`
  height: 20px;
  padding: 0;
  border-bottom: 1px solid #dedede;
`;
const NoteCell = styled(Cell)`
  border-left: 1px solid #dedede;
  background: var(--fill);
`;
const TailCell = styled(Cell)`
  background: #f0f0f0;
  border-bottom: 0;
`;
const NodeLine = styled.div`
  display: flex;
  align-items: center;
  height: 19px;
`;
const Branch = styled.span`
  flex: none;
  align-self: stretch;
  width: 11px;
  margin-left: 28px;
  margin-bottom: -1px;
  border-left: 1px dotted #999;
  background: repeating-linear-gradient(90deg, #999 0 1px, transparent 1px 2px) 0 9px / 9px 1px no-repeat;
`;
const Check = styled.input`
  appearance: none;
  flex: none;
  position: relative;
  width: 13px;
  height: 13px;
  margin-right: 2px;
  border: 1px solid #111;
  outline: 0;
  background: #fff;
  &:checked::after {
    content: "";
    position: absolute;
    inset: 0;
    background: #14b02c;
    clip-path: polygon(0 45%, 20% 38%, 38% 60%, 85% 8%, 100% 18%, 42% 96%, 28% 96%);
  }
`;
const NodeName = styled.label`
  display: flex;
  gap: 8px;
  flex: 1;
  height: 20px;
  padding-left: 2px;
  line-height: 19px;
  white-space: nowrap;
  background: var(--fill);
`;
const NodeIndex = styled.span`
  font-size: 11px;
`;
const RootLine = styled(NodeLine)`
  gap: 4px;
  padding-left: 3px;
`;
const Toggle = styled.button`
  display: grid;
  place-items: center;
  width: 10px;
  height: 10px;
  margin-right: 1px;
  border: 1px solid #999;
  background: #fff;
`;
const VScroll = styled.div`
  position: absolute;
  right: 0;
  top: 17px;
  bottom: 17px;
  width: 17px;
  display: flex;
  flex-direction: column;
  align-items: center;
  padding: 6px 0 7px;
  background: #f0f0f0;
`;
const VThumb = styled.span`
  width: 14px;
  height: 15px;
  margin-top: 8px;
  margin-bottom: auto;
  border: 1px solid #999;
  background: linear-gradient(90deg, #f6f6f6, #c8c8c8);
`;
const HScroll = styled.div`
  display: flex;
  align-items: center;
  justify-content: space-between;
  height: 17px;
  padding: 0 24px 0 5px;
  background: #ececec;
`;
const HThumb = styled.span`
  display: grid;
  place-items: center;
  width: 188px;
  height: 14px;
  margin-right: auto;
  margin-left: 7px;
  border: 1px solid #999;
  background: linear-gradient(#f4f4f4, #c0c3c8);
`;
const Splitter = styled.div`
  display: grid;
  grid-template-columns: 1fr 50px 1fr;
  gap: 4px;
  align-items: center;
  height: 13px;
`;
const SplitLine = styled.span`
  height: 1px;
  background: #b4b4b4;
`;
const SplitHandle = styled.span`
  height: 6px;
  border: 1px solid #aaa;
  background: #d4d4d4;
`;
const Viewport = styled.div`
  flex: 1;
  min-width: 0;
  background: #000;
`;
const Scene = styled.svg`
  display: block;
  width: 100%;
  height: 100%;
`;

const Chevron = ({ d }: { d: string }) => (
  <Svg width="7" height="7" viewBox="0 0 7 7" aria-hidden="true"><path d={d} fill="#333" /></Svg>
);

/* ---------- model drawing ---------- */

const Bolt = ({ x, y, ring }: { x: number; y: number; ring?: boolean }) => (
  <g transform={`translate(${x} ${y})`}>
    <path d="M-8 24q8 9 16 0v-5h-16z" fill="#bdbdbf" stroke="#888" strokeWidth=".8" />
    <ellipse cy="20" rx="11.500" ry="7" fill="#e6e8e8" stroke="#999" strokeWidth=".8" />
    <path d="M-8 8v13q8 5 16 0V8z" fill="#cfcfd1" stroke="#999" strokeWidth=".6" />
    <path d="M-11 1v9q11 8 22 0V1z" fill="#bcbcbe" stroke="#777" strokeWidth=".7" />
    <ellipse rx="10" ry="6" fill="#dfe6e8" stroke="#151515" strokeWidth="3" />
    <ellipse rx="4.500" ry="3" fill="#333" stroke="#000" />
    {ring && <ellipse rx="16" ry="10" fill="none" stroke="#2c4ce0" strokeWidth="1.500" />}
  </g>
);
const Ring = ({ x, y, inner = '#ccccf0' }: { x: number; y: number; inner?: string }) => (
  <g transform={`translate(${x} ${y})`} stroke="#8c8878" strokeWidth="1.200">
    <ellipse rx="23.500" ry="14" fill="#efe6cf" />
    <ellipse rx="17.500" ry="10.500" fill="#f2f2ee" />
    <ellipse rx="13" ry="8" fill="#e4dcd8" strokeWidth=".6" />
    <ellipse cy="3" rx="9" ry="5" fill={inner} stroke="none" />
  </g>
);
const Post = ({ x, y }: { x: number; y: number }) => (
  <g transform={`translate(${x} ${y})`}>
    <path d="M-20 28L-3 18 8 16 20 23 -4 36z" fill="#c9eef0" stroke="#8c8484" strokeWidth="1.500" />
    <path d="M-20 28h1M20 23h-1M-4 36v-1" stroke="#8c7c7c" strokeWidth="4" strokeLinecap="round" />
    <path d="M-5 8v20q4 3 8 0V8z" fill="#d8d6d0" stroke="#999" strokeWidth=".6" />
    <path d="M-7 1v8q7 5 14 0V1z" fill="#c4c0bc" stroke="#888" strokeWidth=".6" />
    <ellipse rx="8.500" ry="5.500" fill="#111" />
    <ellipse rx="4" ry="2" fill="#444" />
  </g>
);

const Model = () => (
  <Scene viewBox="310 225 933 605" role="img" aria-label="模具装配模型">
    {/* datum plane behind the clamping plate */}
    <polygon points="507,405 806,233 1058,378 759,551" fill="#2c191d" />
    {/* base plate */}
    <g stroke="#000" strokeWidth="1.500" strokeLinejoin="round">
      <polygon points="522,660 545,647 1020,619 1043,632 759,795" fill="#fff" />
      <polygon points="522,660 759,795 759,822 522,686" fill="#a2a2a2" />
      <polygon points="759,795 1043,632 1043,660 759,822" fill="#c2c2c2" />
    </g>
    <path d="M749 789l10 5 11-6M753 787l6 4 6-4" fill="none" stroke="#000" strokeWidth="2.500" />
    {/* ejector space */}
    <polygon points="581,618 699,684 699,762 581,693" fill="#111" />
    <polygon points="582,617 607,630 607,639 584,650" fill="#cfcfcf" />
    <polygon points="584,651 605,639 640,645 699,680 697,715" fill="#fff" />
    <g stroke="#000" strokeWidth="1.300">
      <polygon points="584,651 697,715 697,731 583,667" fill="#868b94" />
      <polygon points="583,667 697,731 697,754 583,692" fill="#a28b94" />
    </g>
    <polygon points="583,690 698,755 698,761 582,694" fill="#fff" />
    {[652, 648, 644, 640, 636].map((y) => (
      <ellipse key={y} cx="621" cy={y - 3} rx="16" ry="6" fill="#2428b0" stroke="#06062c" strokeWidth="1.300" />
    ))}
    {[694, 690, 686, 682, 678].map((y) => (
      <ellipse key={y} cx="694" cy={y - 3} rx="13" ry="6" fill="#2428b0" stroke="#06062c" strokeWidth="1.300" />
    ))}
    <ellipse cx="602" cy="651" rx="5" ry="3" fill="#2c34d8" stroke="#000" />
    <ellipse cx="640" cy="653" rx="3" ry="2" fill="#111" />
    <ellipse cx="696" cy="706" rx="5" ry="3.500" fill="#2c34d8" />
    <path d="M688 709l9 5M691 706l6 4" stroke="#000" strokeWidth="2" />
    {/* spacer blocks and mold plates */}
    <g stroke="#000" strokeWidth="1.500" strokeLinejoin="round">
      <polygon points="545,597 582,618 582,693 545,672" fill="#a3a3a3" />
      <polygon points="699,684 735,704 735,782 699,761" fill="#a3a3a3" />
      <polygon points="735,704 1020,542 1020,619 735,782" fill="#bebebe" />
      <polygon points="545,519 735,627 735,704 545,597" fill="#a35a5c" />
      <polygon points="735,627 1020,466 1020,542 735,704" fill="#c46a6c" />
      <polygon points="545,447 735,556 735,627 545,519" fill="#6487a8" />
      <polygon points="735,556 1020,392 1020,466 735,627" fill="#7ba3ce" />
    </g>
    <polygon points="531,519 545,511 545,527" fill="#3c2226" />
    <path d="M545 511l-14 8 98 56" fill="none" stroke="#d89ca2" strokeWidth="1.500" />
    {/* side pocket */}
    <polygon points="629,536 653,551 653,585 629,573" fill="#b06868" />
    <polygon points="629,536 653,551 629,565" fill="#7ea8d6" />
    <polygon points="629,572 653,558 653,585" fill="#ffc0bc" />
    <path d="M629 573v-37l25 15-25 14M629 569l24-13M653 551v34" fill="none" stroke="#000" strokeWidth="1.300" />
    <path d="M625 535l6 2M653 549v8" stroke="#000" strokeWidth="3" />
    <ellipse cx="640" cy="612" rx="5" ry="7.500" transform="rotate(-18 640 612)" fill="#ffc4c0" stroke="#000" strokeWidth="1.500" />
    <ellipse cx="858" cy="606" rx="6" ry="8" transform="rotate(22 858 606)" fill="#7c7c7c" stroke="#111" strokeWidth="1.500" />
    <ellipse cx="896" cy="584" rx="6" ry="8" transform="rotate(22 896 584)" fill="#6c7c70" stroke="#111" strokeWidth="1.500" />
    {/* transparent clamping plate */}
    <polygon points="523,406 806,242 1043,379 1043,405 1020,418 1020,392 735,556 523,434" fill="#b4b1b1" />
    <polygon points="523,434 806,269 1043,405 759,569" fill="#bdb4b6" />
    <polygon points="545,447 829,284 1020,392 735,556" fill="#e8f6f4" />
    <polygon points="560,458 700,380 960,425 870,470 660,500" fill="#f1fbfa" />
    <polygon points="806,242 1043,379 1043,405 806,269" fill="#aba9a9" opacity=".85" />
    <path d="M523 434L806 269l26 15M806 242v27" fill="none" stroke="#8c8888" strokeWidth="1.200" />
    <Ring x={830} y={307} />
    <Ring x={977} y={391} />
    <Ring x={588} y={446} inner="#c4c0d4" />
    <Ring x={737} y={531} inner="#b4a4a8" />
    <polygon points="523,406 759,542 759,569 523,434" fill="#9fb8b4" opacity=".4" />
    <polygon points="523,406 545,419 545,447 523,434" fill="#8e8e8e" />
    <polygon points="759,542 1043,379 1043,405 759,569" fill="#c2c2c8" opacity=".8" />
    <polygon points="1020,392 1043,379 1043,405 1020,418" fill="#929292" />
    <ellipse cx="859" cy="496" rx="6" ry="8" transform="rotate(22 859 496)" fill="#b4b4b8" stroke="#929296" />
    <ellipse cx="896" cy="474" rx="6" ry="8" transform="rotate(22 896 474)" fill="#b4b4b8" stroke="#929296" />
    <path d="M523 406l236 136L1043 379" fill="none" stroke="#111" strokeWidth="1.300" />
    <path d="M545 447l214 122L1020 418M759 542v27" fill="none" stroke="#111" strokeWidth="1.500" />
    <path d="M735 556l24-14M523 434l22-14" stroke="#555" />
    <path d="M749 561l10 5 9-5" fill="none" stroke="#333" strokeWidth="3" />
    <polygon points="507,405 806,233 1058,378 759,551" fill="none" stroke="#dca0a8" strokeWidth="1.500" />
    {/* fasteners */}
    <Bolt x={792} y={299} ring />
    <Bolt x={706} y={348} ring />
    <Bolt x={620} y={398} />
    <Bolt x={943} y={387} />
    <Bolt x={858} y={437} />
    <Bolt x={772} y={486} />
    <Post x={885} y={333} />
    <Post x={680} y={452} />
    <path d="M638 502l42-22 29 16" fill="none" stroke="#7c90ee" strokeWidth="1.500" />
    {/* locating ring */}
    <path d="M737 415c6 40 88 40 94 0z" fill="#dcdedd" stroke="#999" />
    <path d="M818 424v10q4 3 8 0v-10z" fill="#d8d4b8" />
    <path d="M718 396a66 38 0 0 0 130 0v8a66 38 0 0 1-130 0z" fill="#c8cccb" stroke="#888" />
    <path d="M716 380v13a67 37 0 0 0 134 0v-13z" fill="#0d7456" stroke="#000" strokeWidth="1.500" />
    <ellipse cx="783" cy="380" rx="67" ry="37.500" fill="#0cc193" stroke="#000" strokeWidth="1.800" />
    <clipPath id="bore"><ellipse cx="783" cy="381" rx="48" ry="28" /></clipPath>
    <g clipPath="url(#bore)">
      <rect x="730" y="350" width="110" height="64" fill="#0c684e" />
      <ellipse cx="783" cy="392" rx="48" ry="28" fill="#3a9478" />
      <ellipse cx="783" cy="398" rx="47" ry="27" fill="#c9cccb" stroke="#000" strokeWidth="1.500" />
      <ellipse cx="783" cy="400" rx="45" ry="25" fill="none" stroke="#fff" strokeWidth="1.500" />
      <ellipse cx="784" cy="411" rx="38" ry="19" fill="#e6f2ee" stroke="#111" strokeWidth="1.300" />
      <ellipse cx="786" cy="411" rx="28" ry="14" fill="#a8c62c" stroke="#333" />
      <ellipse cx="768" cy="405" rx="7" ry="4" fill="#222" />
    </g>
    <ellipse cx="783" cy="381" rx="48" ry="28" fill="none" stroke="#000" strokeWidth="2.500" />
    <ellipse cx="742" cy="357" rx="8" ry="5" fill="#0a0a0a" />
    <ellipse cx="823" cy="404" rx="8" ry="5" fill="#0a0a0a" />
    {/* highlighted edges */}
    <path d="M712 519l2-6 9-3 1-12 5-5 9 0 5 4 2 4 11 1 6-5 9 1 2 6 0 6 3 5-1 10-5 8-9 3-5-3-8 2-7-4-13 2-9-6-6-1z" fill="#f9963a" />
    <path d="M755 512l9-5 5 4-3 4 6 4-5 4-9-3z" fill="#f4f0e8" />
    <path d="M765 530l7-7M728 501l5-4M738 512l5-5" stroke="#fde0c0" strokeWidth="2" />
    {/* work coordinate system */}
    <g fontFamily="Liberation Sans" fontSize="13">
      <path d="M781 483l-2-12 3-25 3 25-2 12z" fill="#3c54a8" />
      <path d="M787 489l20-15 14-4-10 10z" fill="#9cc8a0" />
      <path d="M786 492l18 7 17 13-16-7z" fill="#dc7078" />
      <text x="786" y="444" fill="#2c48d0">ZC</text>
      <text x="807" y="464" fill="#4c9050">YC</text>
      <text x="806" y="527" fill="#d04048">XC</text>
    </g>
    {/* view triad */}
    <g fontFamily="Liberation Sans" fontSize="12">
      <polygon points="376,751 391,759 391,776 376,785 362,776 362,759" fill="#acacac" />
      <path d="M362 759l14 8 15-8M376 767v18" fill="none" stroke="#888" />
      <path d="M362 776l30-18" stroke="#90b890" strokeWidth="2" />
      <path d="M361 776v-22" stroke="#1c3cc8" strokeWidth="3" />
      <path d="M357 757l4-7 4 7z" fill="#1c3cc8" />
      <path d="M362 777l20 11" stroke="#c82c2c" strokeWidth="3" />
      <path d="M386 791l-8-1 4-6z" fill="#c82c2c" />
      <circle cx="361" cy="776" r="4.500" fill="#d4d4d4" />
      <text x="357" y="749" fill="#2c48d8">Z</text>
      <text x="386" y="798" fill="#d02c2c">X</text>
    </g>
  </Scene>
);

/* ---------- data ---------- */

const TITLE = ['NX 8.5', '-', '建模', '-', '[zhuangpeitu_UG7.5.prt', '（修改的）', ']'];

const MENUS: [string, string][] = [
  ['文件', 'F'], ['编辑', 'E'], ['视图', 'V'], ['插入', 'S'], ['格式', 'R'], ['工具', 'T'], ['装配', 'A'],
  ['信息', 'I'], ['分析', 'L'], ['首选项', 'P'], ['窗口', 'O'], ['GC 工具箱', ''], ['帮助', 'H'],
];

const KIND: Record<string, string> = {
  体: 'body', 块: 'block', 求差: 'subtract', 圆柱: 'cylinder', 求和: 'unite', 边倒圆: 'blend',
};
const NODES = [
  '体', '体', '体', '体', '体', '体', '体', '体', '块', '块', '块', '求差', '求差', '圆柱', '圆柱', '求和',
  '圆柱', '圆柱', '圆柱', '求和', '求差', '边倒圆', '体', '体', '体',
];
const TABS: { icon: string; on?: boolean; gap?: boolean }[] = [
  { icon: 'tabAsm' }, { icon: 'tabCons' }, { icon: 'tabPart', on: true }, { icon: 'tabLib', gap: true },
  { icon: 'tabWeb', gap: true }, { icon: 'tabDoc', gap: true }, { icon: 'tabClock' }, { icon: 'tabList' },
  { icon: 'tabLine' }, { icon: 'tabPen' }, { icon: 'tabUser' }, { icon: 'tabPic' },
];

const MinGlyph = () => <Svg width="9" height="9" viewBox="0 0 9 9"><path d="M1 7h7" stroke="currentColor" strokeWidth="2" /></Svg>;
const RestoreGlyph = () => (
  <Svg width="10" height="10" viewBox="0 0 10 10">
    <path d="M1 4h5v5H1zM3 3V1h6v5H7" fill="none" stroke="currentColor" strokeWidth="1.400" />
  </Svg>
);
const CloseGlyph = () => <Svg width="9" height="9" viewBox="0 0 9 9"><path d="M1 1l7 7M8 1L1 8" stroke="currentColor" strokeWidth="2" /></Svg>;

const Captions = ({ light }: { light?: boolean }) => (
  <WindowButtons $shift={light ? 7 : 10}>
    <CaptionButton $tone={light ? 'light' : 'dark'} aria-label="最小化"><MinGlyph /></CaptionButton>
    <CaptionButton $tone={light ? 'light' : 'dark'} aria-label="还原"><RestoreGlyph /></CaptionButton>
    <CaptionButton $tone={light ? 'light' : 'red'} aria-label="关闭"><CloseGlyph /></CaptionButton>
  </WindowButtons>
);

export default function App() {
  return (
    <Page>
      <Global />
      <Defs />
      <TitleBar>
        <TitleText>{TITLE.map((t, i) => <span key={i}>{t}</span>)}</TitleText>
        <Bubbles width="520" height="10" viewBox="0 0 520 10" aria-hidden="true">
          {[28, 138, 305, 480].map((x, i) => (
            <g key={x}>
              <ellipse cx={x - 4} cy="-3" rx="18" ry="7" fill="#e4e4e4" />
              {i === 1 && <ellipse cx={x} cy="-3" rx="11" ry="5" fill="#d02020" />}
              <rect x={x + 7} y="-3" width="13" height="11" rx="3" fill="#c8c8c8" />
              <path d={`M${x + 12} 0v3h4`} fill="none" stroke="#fff" />
            </g>
          ))}
        </Bubbles>
        <Brand>SIEMENS</Brand>
        <Captions />
      </TitleBar>

      <MenuBar>
        {MENUS.map(([name, key]) => (
          <MenuItem key={name}>
            {key ? name : <><Mono>GC </Mono>工具箱</>}
            {key && <Mono>(<u>{key}</u>)</Mono>}
          </MenuItem>
        ))}
        <MenuSpace />
        <Captions light />
      </MenuBar>

      <Bar $h={34} $bg="linear-gradient(#e2e2e2, #d6d6d6)">
        <StartButton><Icon name="swirl" />开始</StartButton>
        <Drop />
        <Tool name="newdoc" label="新建" /><Tool name="open" label="打开" /><Tool name="save" label="保存" />
        <Separator />
        <Tool name="cut" label="剪切" /><Tool name="copy" label="复制" /><Tool name="paste" label="粘贴" /><Tool name="del" label="删除" />
        <Separator />
        <Tool name="undo" label="撤消" /><Tool name="redo" label="重做" />
        <Separator />
        <TextButton><Icon name="find" />命令查找器</TextButton>
        <Tool name="laptop" label="触摸模式" /><Drop /><More />
        <GroupEnd /><Grip />
        <Tool name="fit" label="适合窗口" /><Drop />
        <Tool name="laptop" label="定向视图" /><Drop />
        <Tool name="bluecube" label="带边着色" /><Drop />
        <Tool name="window" label="背景" /><Drop />
        <Separator />
        <Tool name="doorin" label="编辑截面" /><Tool name="door" label="剪切截面" /><More />
        <GroupEnd /><Grip />
        <Tool name="palette" label="编辑对象显示" />
        <Separator />
        <Tool name="arrowcube" label="显示和隐藏" /><Drop />
        <Separator />
        <Tool name="align" label="移动对象" /><Drop />
        <Tool name="ruler" label="测量距离" /><More />
        <GroupEnd />
      </Bar>

      <Bar $h={62} $bg="linear-gradient(#dedede, #cdcecd)">
        <Lead><Big name="plane" label="基准平面" /></Lead><Drop />
        <Big name="extrude" label="拉伸" /><Drop />
        <Big name="hole" label="孔" />
        <Big name="thread" label="螺纹" />
        <Separator />
        <Big name="pattern" label="阵列特征" /><Drop />
        <Big name="unite" label="求和" /><Drop />
        <Big name="trim" label="修剪体" /><Drop />
        <Big name="shell" label="抽壳" />
        <Gap $w={32} />
        <MoreColumn $low aria-label="更多">
          <Svg width="9" height="7" viewBox="0 0 9 7"><path d="M1 0l3 3-3 3M5 0l3 3-3 3" fill="none" stroke="#111" strokeWidth="1.300" /></Svg>
          <Triangle />
        </MoreColumn>
        <GroupEnd /><Grip />
        <Big name="offset" label="偏置区域" /><Drop />
        <Big name="delface" label="删除面" /><More />
        <GroupEnd /><Grip />
        <Tool name="plugcheck" label="检查" /><Tool name="plugtree" label="导航" /><Tool name="plugtable" label="表格" /><Tool name="csys" label="坐标系" />
        <More />
        <GroupEnd /><Grip />
        <Big name="chrome" label="真实着色" />
        <Big name="ballA" label="光亮金属刷色" off /><Drop />
        <Big name="ballB" label="红色亮泽塑料" off /><Drop />
        <Big name="panelA" label="无全局反射图" off /><Drop />
        <Big name="panelB" label="渐变深灰色背景" off /><Drop />
      </Bar>

      <Bar $h={35} $bg="linear-gradient(#d2d2d2, #c6c6c6)">
        <ClippedButton aria-label="工作部件"><Icon name="nest" /></ClippedButton>
        <Tool name="layers" label="图层设置" /><Tool name="layerlist" label="图层视图" />
        <Separator />
        <Tool name="tag" label="属性" />
        <Separator />
        <Tool name="asm1" label="检查一" /><Tool name="asm2" label="检查二" /><Tool name="asm3" label="检查三" />
        <Separator />
        <Tool name="abc" label="注释" /><More />
        <GroupEnd /><Grip />
        <Tool name="surf1" label="桥接" /><Tool name="surf2" label="曲面" /><Tool name="hand" label="选择" /><More />
        <GroupEnd /><Grip />
        <Tool name="spring" label="圆柱弹簧" /><Tool name="spring2" label="拉伸弹簧" /><Tool name="washer" label="碟簧" />
        <Separator />
        <Tool name="cutspring" label="删除弹簧" /><More />
        <GroupEnd />
        <Gap $w={92} />
        <GroupEnd /><Grip />
        <Tool name="triangle" label="三角" /><Tool name="sheet" label="表" /><Tool name="foldplus" label="点组" /><Tool name="foldcirc" label="圆组" /><More />
        <GroupEnd />
        <Gap $w={28} />
        <GroupEnd /><Grip />
        <Tool name="lock1" label="锁定" /><Tool name="lock2" label="解锁" /><More />
        <GroupEnd />
      </Bar>

      <Bar $h={27} $bg="linear-gradient(#bdbdbd, #d2d2d2 6px, #d6d6d6)">
        <Filter w={112} left={-18} text="没有选择过滤器" label="类型过滤器" />
        <Filter w={116} left={8} text="整个装配" label="选择范围" />
        <Gap $w={4} />
        <Snap name="graygear" />
        <Separator />
        <Snap name="graytool" /><Snap name="rotcross" /><Snap name="cubefind" />
        <Separator />
        <Snap name="whitebox" /><Snap name="glasscube" />
        <Separator />
        <Snap name="end" on /><Snap name="mid" on /><Snap name="curve" /><Snap name="inter" /><Snap name="center" on />
        <Snap name="quad" /><Snap name="exist" on /><Snap name="oncurve" on /><Snap name="onface" />
        <Separator />
        <Snap name="grid" />
      </Bar>

      <StatusBar>
        <StatusCell />
        <StatusCell>体<StatusMono>(0)</StatusMono> 已选定</StatusCell>
        <StatusCell />
        <StatusCell />
        <StatusIcons><Icon name="noise" size={16} /><Icon name="fullscreen" size={16} /></StatusIcons>
      </StatusBar>

      <Work>
        <TabStrip>
          {TABS.map((t) => (
            <Tab key={t.icon} $on={t.on} $gap={t.gap} aria-label={t.icon}><Icon name={t.icon} size={20} /></Tab>
          ))}
        </TabStrip>
        <Panel>
          <PanelTitle><Icon name="pin" size={13} />部件导航器</PanelTitle>
          <TreeFrame>
            <TreeTable>
              <colgroup><NameCol /><col /><ScrollCol /></colgroup>
              <thead>
                <tr>
                  <Head scope="col">
                    <HeadLabel>
                      名称
                      <Svg width="10" height="5" viewBox="0 0 10 5"><path d="M0 5h10L5 0z" fill="#111" /></Svg>
                    </HeadLabel>
                  </Head>
                  <Head scope="col">附注</Head>
                  <HeadTail aria-hidden="true" />
                </tr>
              </thead>
              <tbody>
                <Row>
                  <Cell>
                    <RootLine>
                      <Toggle aria-label="折叠"><Svg width="6" height="2" viewBox="0 0 6 2"><path d="M0 1h6" stroke="#333" /></Svg></Toggle>
                      <Icon name="folder" size={16} />
                      模型历史记录
                    </RootLine>
                  </Cell>
                  <NoteCell />
                  <TailCell />
                </Row>
                {NODES.map((n, i) => (
                  <Row key={i} $alt={i % 2 === 0} $sel={i === 0}>
                    <Cell>
                      <NodeLine>
                        <Branch />
                        <Check type="checkbox" id={`n${i}`} defaultChecked />
                        <Icon name={KIND[n]} size={16} />
                        <NodeName htmlFor={`n${i}`}>{n}<NodeIndex>({i})</NodeIndex></NodeName>
                      </NodeLine>
                    </Cell>
                    <NoteCell />
                    <TailCell />
                  </Row>
                ))}
              </tbody>
            </TreeTable>
            <HScroll>
              <Chevron d="M5 0v7L1 3.500z" />
              <HThumb><Svg width="8" height="6" viewBox="0 0 8 6"><path d="M1 0v6M4 0v6M7 0v6" stroke="#555" /></Svg></HThumb>
              <Chevron d="M2 0v7l4-3.500z" />
            </HScroll>
            <VScroll>
              <Chevron d="M0 5h7L3.500 1z" />
              <VThumb />
              <Chevron d="M0 2h7L3.500 6z" />
            </VScroll>
          </TreeFrame>
          <Splitter><SplitLine /><SplitHandle /><SplitLine /></Splitter>
        </Panel>
        <Viewport><Model /></Viewport>
      </Work>

      <Bar $h={29} $bg="#dadada">
        <ClippedButton aria-label="查找组件"><Icon name="noise" size={22} /></ClippedButton>
        <Tool name="addcomp" label="添加组件" /><Tool name="movecomp" label="移动组件" /><Tool name="mirror" label="镜像装配" />
        <Separator />
        <Tool name="comps" label="组件阵列" /><More />
        <GroupEnd />
      </Bar>
    </Page>
  );
}
